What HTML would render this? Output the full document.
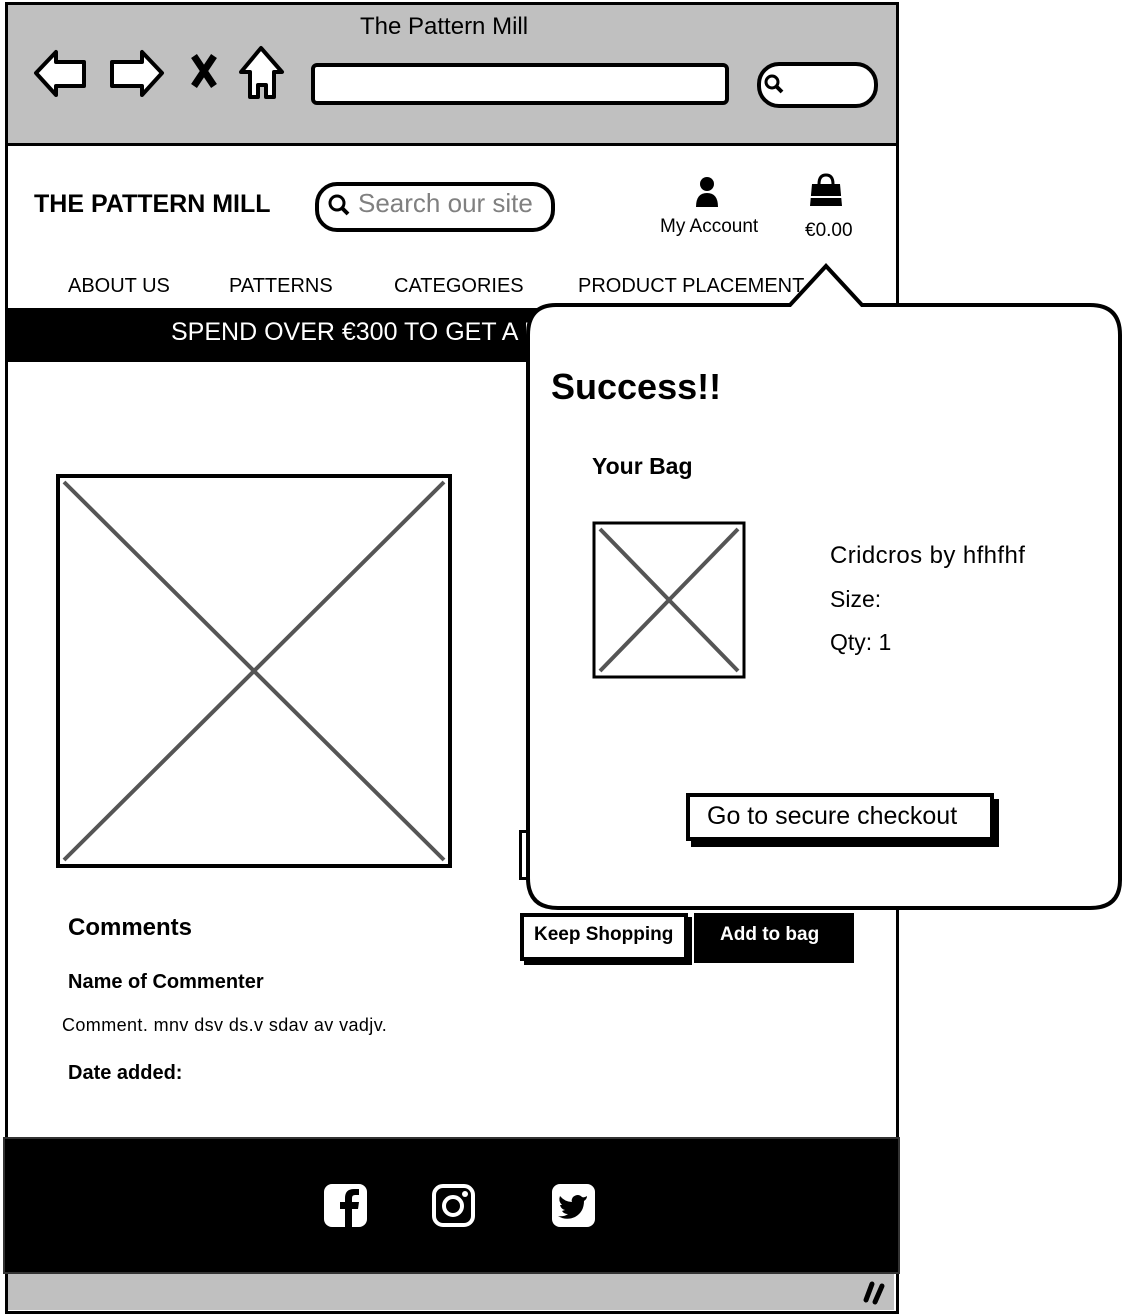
<!DOCTYPE html>
<html><head><meta charset="utf-8"><style>
body{margin:0;width:1126px;height:1316px;background:#fff;position:relative;overflow:hidden;font-family:"Liberation Sans",sans-serif;color:#000}
.a{position:absolute}
.t{position:absolute;white-space:nowrap}
</style></head><body>
<div class="a" style="left:5px;top:2px;width:888px;height:1306px;border:3px solid #000;background:#fff"></div>
<div class="a" style="left:8px;top:5px;width:888px;height:138px;background:#c0c0c0;border-bottom:3px solid #000"></div>
<div class="t" style="left:360px;top:13px;font-size:24px">The Pattern Mill</div>
<svg class="a" style="left:30px;top:40px" width="260" height="65" viewBox="0 0 260 65">
<path d="M6 33 L26 12 L26 22 L54 22 L54 46 L26 46 L26 55 Z" fill="#fff" stroke="#000" stroke-width="4" stroke-linejoin="round"/>
<path d="M132 33 L112 12 L112 22 L82 22 L82 46 L112 46 L112 55 Z" fill="#fff" stroke="#000" stroke-width="4" stroke-linejoin="round"/>
<path d="M164 16 L184 46 M184 16 L164 46" stroke="#000" stroke-width="7"/>
<path d="M231 8 L252 32 L244 32 L244 57 L236 57 L236 45 L228 45 L228 57 L220 57 L220 32 L211 32 Z" fill="#fff" stroke="#000" stroke-width="4" stroke-linejoin="round"/>
</svg>
<div class="a" style="left:311px;top:63px;width:410px;height:34px;border:4px solid #000;border-radius:6px;background:#fff"></div>
<div class="a" style="left:757px;top:62px;width:113px;height:38px;border:4px solid #000;border-radius:22px;background:#fff"></div>
<svg class="a" style="left:762px;top:72px" width="24" height="24"><circle cx="10" cy="10" r="6" fill="none" stroke="#000" stroke-width="3"/><path d="M14 14 L20 20" stroke="#000" stroke-width="4"/></svg>
<div class="t" style="left:34px;top:190px;font-size:25px;font-weight:bold">THE PATTERN MILL</div>
<div class="a" style="left:315px;top:182px;width:232px;height:42px;border:4px solid #000;border-radius:22px"></div>
<svg class="a" style="left:326px;top:192px" width="26" height="26"><circle cx="11" cy="11" r="7" fill="none" stroke="#000" stroke-width="3"/><path d="M16 16 L22 22" stroke="#000" stroke-width="4"/></svg>
<div class="t" style="left:358px;top:188px;font-size:26px;color:#808080">Search our site</div>
<svg class="a" style="left:693px;top:175px" width="28" height="32"><circle cx="14" cy="9" r="7"/><path d="M3 32 Q3 18 14 18 Q25 18 25 32Z"/></svg>
<div class="t" style="left:660px;top:216px;font-size:19px">My Account</div>
<svg class="a" style="left:808px;top:172px" width="36" height="36"><path d="M11 12 Q11 3 18 3 Q25 3 25 12" fill="none" stroke="#000" stroke-width="3"/><path d="M4 12 H32 L34 34 H2Z"/><rect x="2" y="24" width="32" height="2" fill="#fff"/></svg>
<div class="t" style="left:805px;top:220px;font-size:19px">€0.00</div>
<div class="t" style="left:68px;top:275px;font-size:20px">ABOUT US</div>
<div class="t" style="left:229px;top:275px;font-size:20px">PATTERNS</div>
<div class="t" style="left:394px;top:275px;font-size:20px">CATEGORIES</div>
<div class="t" style="left:578px;top:275px;font-size:20px">PRODUCT PLACEMENT</div>
<div class="a" style="left:5px;top:308px;width:893px;height:54px;background:#000"></div>
<div class="t" style="left:171px;top:318px;font-size:25px;color:#fff">SPEND OVER €300 TO GET A FREE GIFT</div>
<svg class="a" style="left:56px;top:474px" width="398" height="396"><rect x="2" y="2" width="392" height="390" fill="#fff" stroke="#000" stroke-width="4"/><path d="M8 8 L388 386 M388 8 L8 386" stroke="#555" stroke-width="4"/></svg>
<div class="t" style="left:68px;top:914px;font-size:24px;font-weight:bold">Comments</div>
<div class="t" style="left:68px;top:971px;font-size:20px;font-weight:bold">Name of Commenter</div>
<div class="t" style="left:62px;top:1015px;font-size:18px;letter-spacing:0.4px">Comment. mnv dsv ds.v sdav av vadjv.</div>
<div class="t" style="left:68px;top:1062px;font-size:20px;font-weight:bold">Date added:</div>
<div class="a" style="left:520px;top:913px;width:160px;height:40px;border:4px solid #000;background:#fff;box-shadow:4px 4px 0 #000"></div>
<div class="t" style="left:534px;top:924px;font-size:19px;font-weight:bold">Keep Shopping</div>
<div class="a" style="left:694px;top:913px;width:160px;height:50px;background:#000"></div>
<div class="t" style="left:720px;top:924px;font-size:19px;font-weight:bold;color:#fff">Add to bag</div>
<div class="a" style="left:519px;top:830px;width:10px;height:44px;border:3px solid #000;border-right:none"></div>
<div class="a" style="left:3px;top:1137px;width:893px;height:133px;background:#000;border:2px solid #333"></div>
<div class="a" style="left:8px;top:1274px;width:886px;height:36px;background:#c0c0c0"></div>
<svg class="a" style="left:858px;top:1278px" width="30" height="28"><path d="M8 22 L14 6 M17 24 L24 8" stroke="#000" stroke-width="5" stroke-linecap="round"/></svg>
<svg class="a" style="left:324px;top:1184px" width="44" height="44"><rect x="0" y="0" width="43" height="43" rx="8" fill="#fff"/><path d="M28 43 V25 H34 L35 18 H28 V14 Q28 11 31 11 H35 V5 H30 Q21 5 21 14 V18 H16 V25 H21 V43Z" fill="#000"/></svg>
<svg class="a" style="left:432px;top:1184px" width="44" height="44"><rect x="2" y="2" width="39" height="39" rx="9" fill="none" stroke="#fff" stroke-width="4"/><circle cx="21" cy="22" r="9" fill="none" stroke="#fff" stroke-width="4"/><circle cx="33" cy="10" r="3" fill="#fff"/></svg>
<svg class="a" style="left:552px;top:1184px" width="44" height="44"><rect x="0" y="0" width="43" height="43" rx="8" fill="#fff"/><path d="M35 12 Q32 14 30 13 Q26 9 21 13 Q19 16 20 18 Q13 18 8 12 Q6 17 10 21 L8 21 Q9 25 13 26 L10 27 Q12 30 16 30 Q12 33 6 32 Q14 37 23 33 Q32 28 32 17 Q35 15 35 12Z" fill="#000"/></svg>
<svg class="a" style="left:520px;top:258px" width="606" height="658">
<path d="M36 47 H270 L306 8 L342 47 H570 Q600 47 600 77 V622 Q600 650 570 650 H38 Q8 650 8 620 V77 Q8 47 36 47 Z" fill="#fff" stroke="#000" stroke-width="4"/>
</svg>
<div class="t" style="left:551px;top:366px;font-size:36px;font-weight:bold">Success!!</div>
<div class="t" style="left:592px;top:453px;font-size:23px;font-weight:bold">Your Bag</div>
<svg class="a" style="left:592px;top:521px" width="155" height="159"><rect x="2" y="2" width="150" height="154" fill="#fff" stroke="#000" stroke-width="3"/><path d="M8 8 L146 150 M146 8 L8 150" stroke="#555" stroke-width="4"/></svg>
<div class="t" style="left:830px;top:542px;font-size:24px;letter-spacing:0.4px">Cridcros by hfhfhf</div>
<div class="t" style="left:830px;top:586px;font-size:23px">Size:</div>
<div class="t" style="left:830px;top:629px;font-size:23px">Qty: 1</div>
<div class="a" style="left:686px;top:793px;width:300px;height:40px;border:4px solid #000;background:#fff;box-shadow:5px 6px 0 #000"></div>
<div class="t" style="left:707px;top:802px;font-size:25px">Go to secure checkout</div>
</body></html>
